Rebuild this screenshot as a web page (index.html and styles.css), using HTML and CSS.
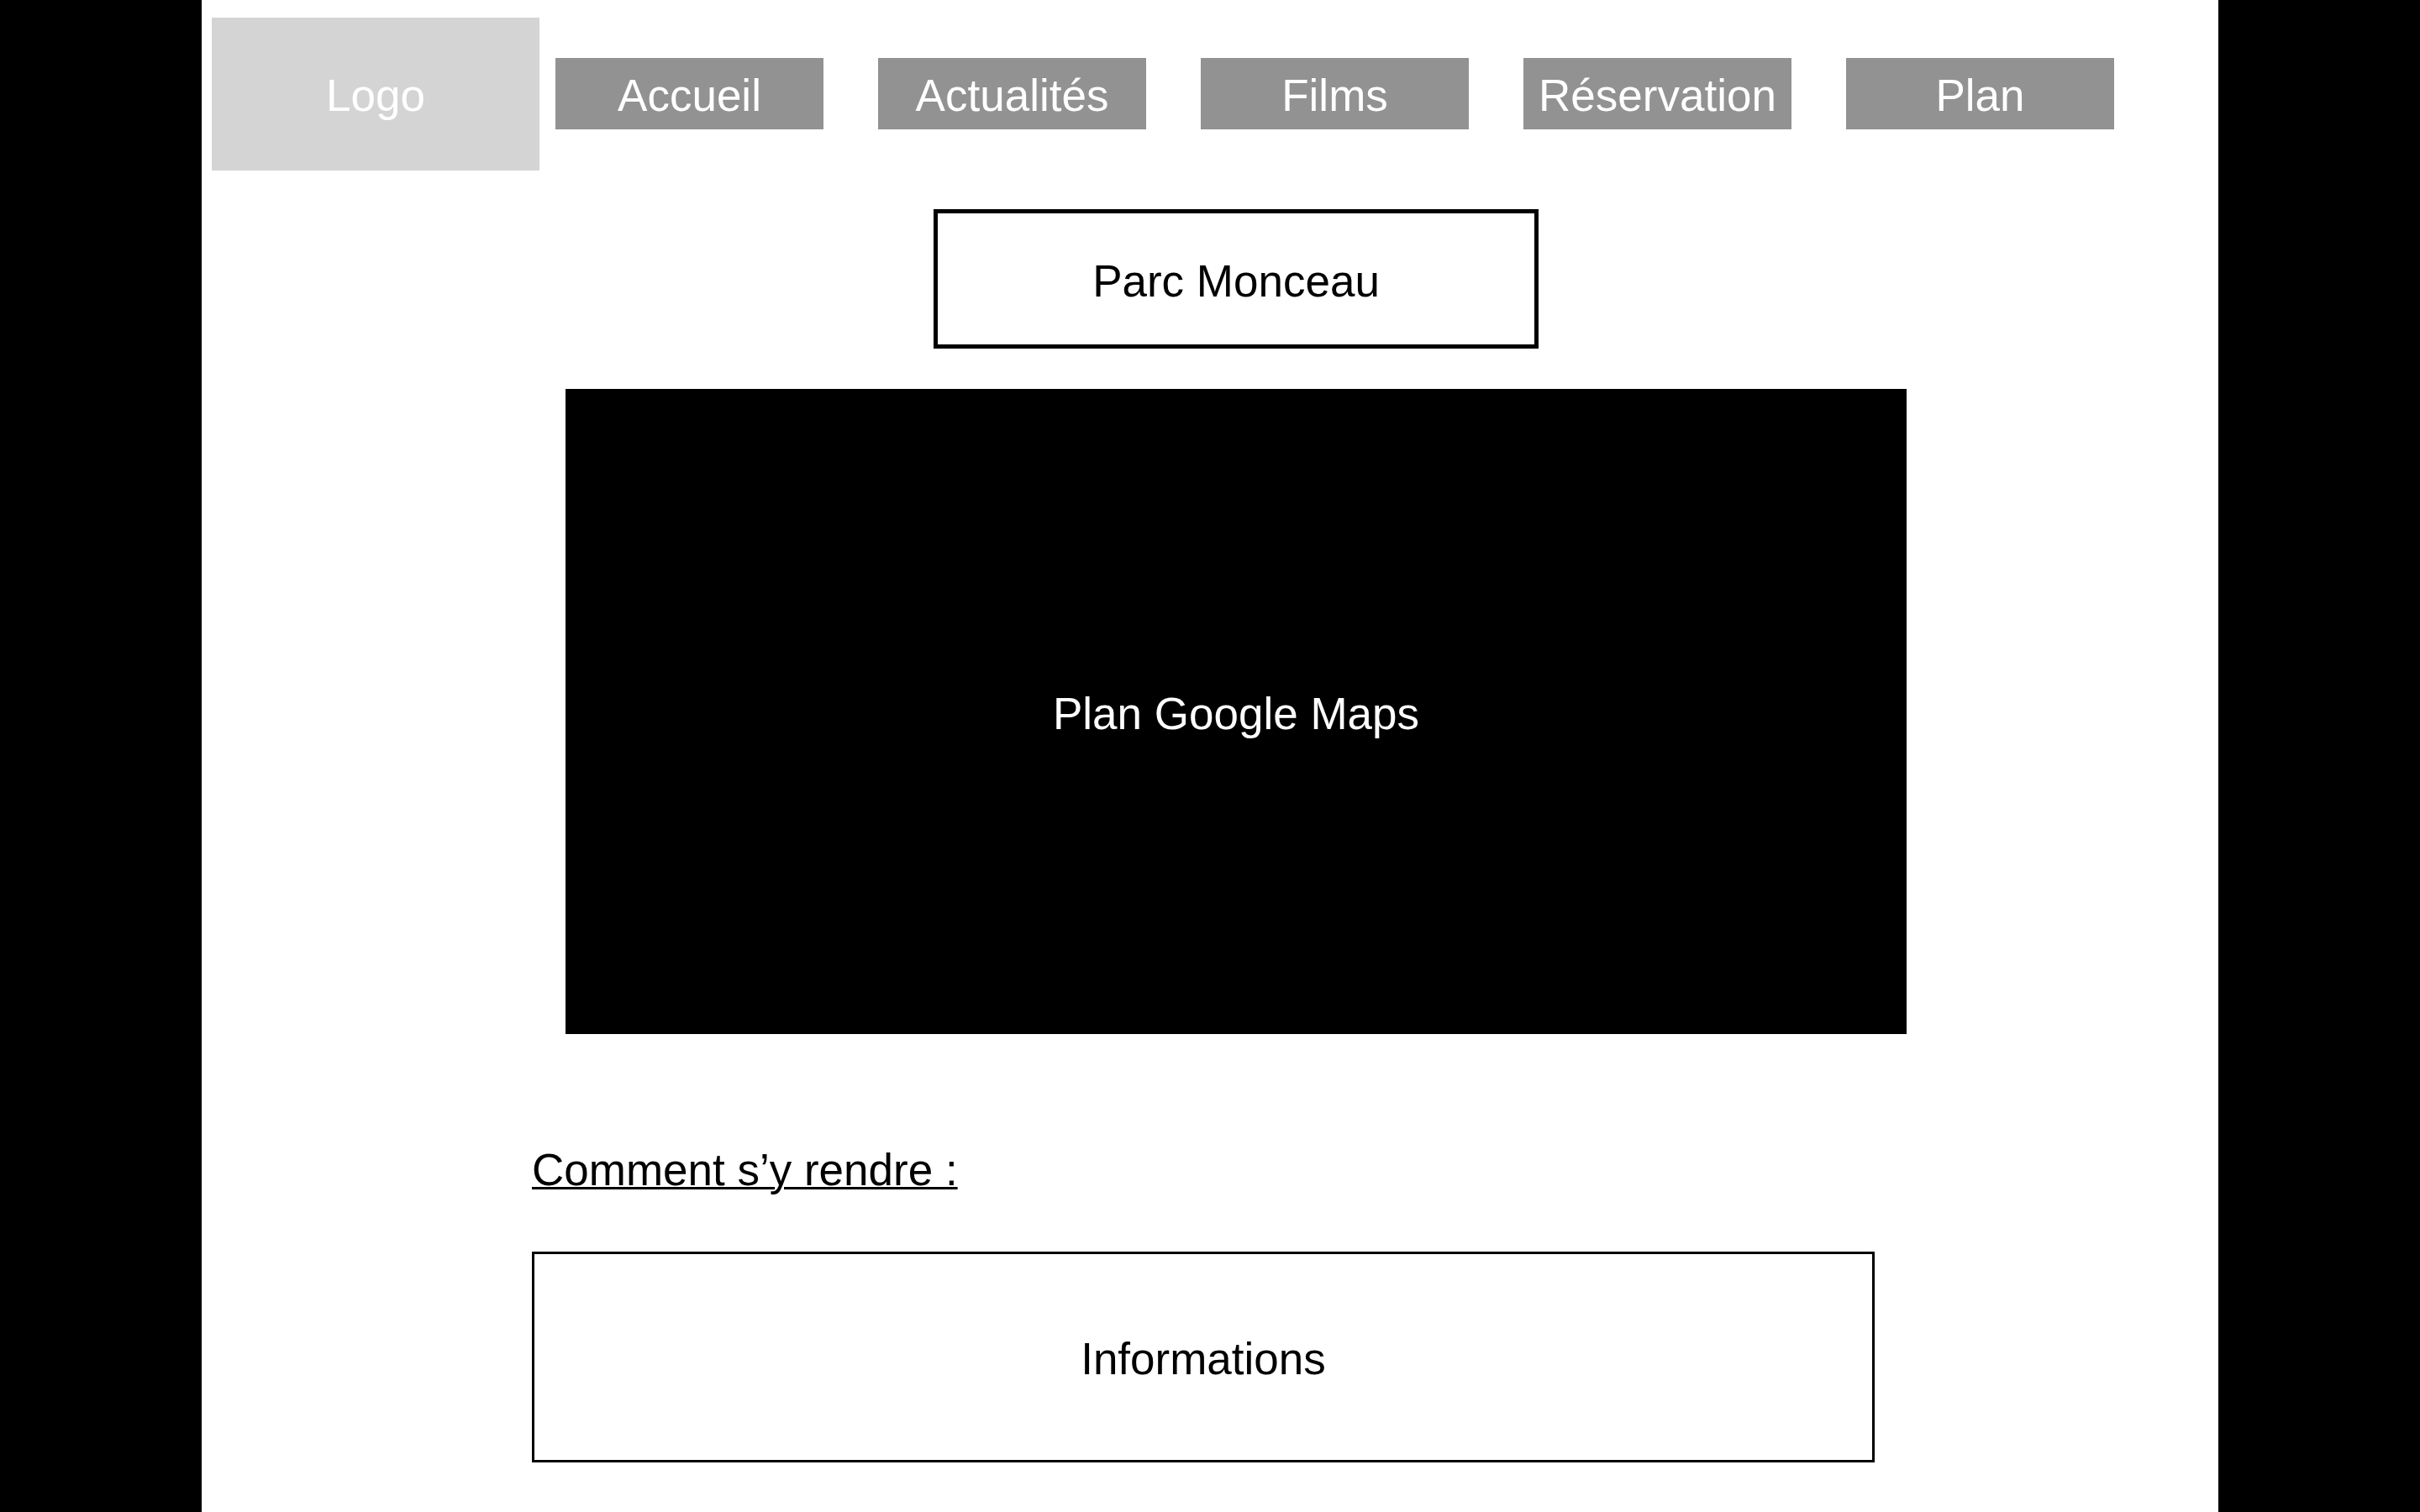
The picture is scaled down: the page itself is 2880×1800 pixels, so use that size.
FILE: index.html
```html
<!DOCTYPE html>
<html>
<head>
    <title>Plan - Parc Monceau</title>
    <meta charset="UTF-8">
    <link rel="stylesheet" href="styles.css">
</head>
<body>
    <div id="page">
        <nav id="menu">
            <div class="logo">Logo</div>
            <a class="menu-item" href="#">Accueil</a>
            <a class="menu-item" href="#">Actualités</a>
            <a class="menu-item" href="#">Films</a>
            <a class="menu-item" href="#">Réservation</a>
            <a class="menu-item" href="#">Plan</a>
        </nav>

        <div id="content">
            <h1 class="lieu">Parc Monceau</h1>
            <div class="carte">Plan Google Maps</div>

            <h2 class="acces-titre">Comment s’y rendre :</h2>
            <div class="infos">Informations</div>
        </div>
    </div>
</body>
</html>
```

FILE: styles.css
```css
/* Mise en page générale */
html,
body {
    margin: 0;
    padding: 0;
}

body {
    background-color: #000;
    font-family: "Liberation Sans", Arial, sans-serif;
    font-size: 53px;
    color: #000;
}

#page {
    width: 2400px;
    min-height: 100vh;
    margin: 0 auto;
    background-color: #fff;
}

/* Menu du haut */
#menu {
    display: flex;
    align-items: flex-start;
    padding: 21px 0 0 12px;
}

.logo {
    width: 390px;
    height: 182px;
    display: flex;
    align-items: center;
    justify-content: center;
    padding-top: 2px;
    box-sizing: border-box;
    background-color: #d4d4d4;
    color: #fff;
    margin-right: 19px;
}

.menu-item {
    width: 319px;
    height: 85px;
    margin-top: 48px;
    margin-right: 65px;
    display: flex;
    align-items: center;
    justify-content: center;
    padding-top: 4px;
    box-sizing: border-box;
    background-color: #929292;
    color: #fff;
    text-decoration: none;
}

/* Contenu */
#content {
    padding-left: 62px;
    padding-bottom: 40px;
}

.lieu {
    width: 720px;
    height: 166px;
    margin: 46px auto 0;
    box-sizing: border-box;
    border: 5px solid #000;
    display: flex;
    align-items: center;
    justify-content: center;
    padding-top: 4px;
    font-size: 53px;
    font-weight: normal;
}

.carte {
    width: 1596px;
    height: 768px;
    margin: 48px auto 0;
    background-color: #000;
    color: #fff;
    display: flex;
    align-items: center;
    justify-content: center;
    padding-top: 4px;
    box-sizing: border-box;
}

.acces-titre {
    margin: 131px 0 0 331px;
    font-size: 53px;
    font-weight: normal;
    line-height: 61px;
    text-decoration: underline;
    text-decoration-thickness: 3px;
}

.infos {
    width: 1598px;
    height: 251px;
    margin: 67px 0 0 331px;
    box-sizing: border-box;
    border: 3px solid #000;
    display: flex;
    align-items: center;
    justify-content: center;
    padding-top: 4px;
}
```
